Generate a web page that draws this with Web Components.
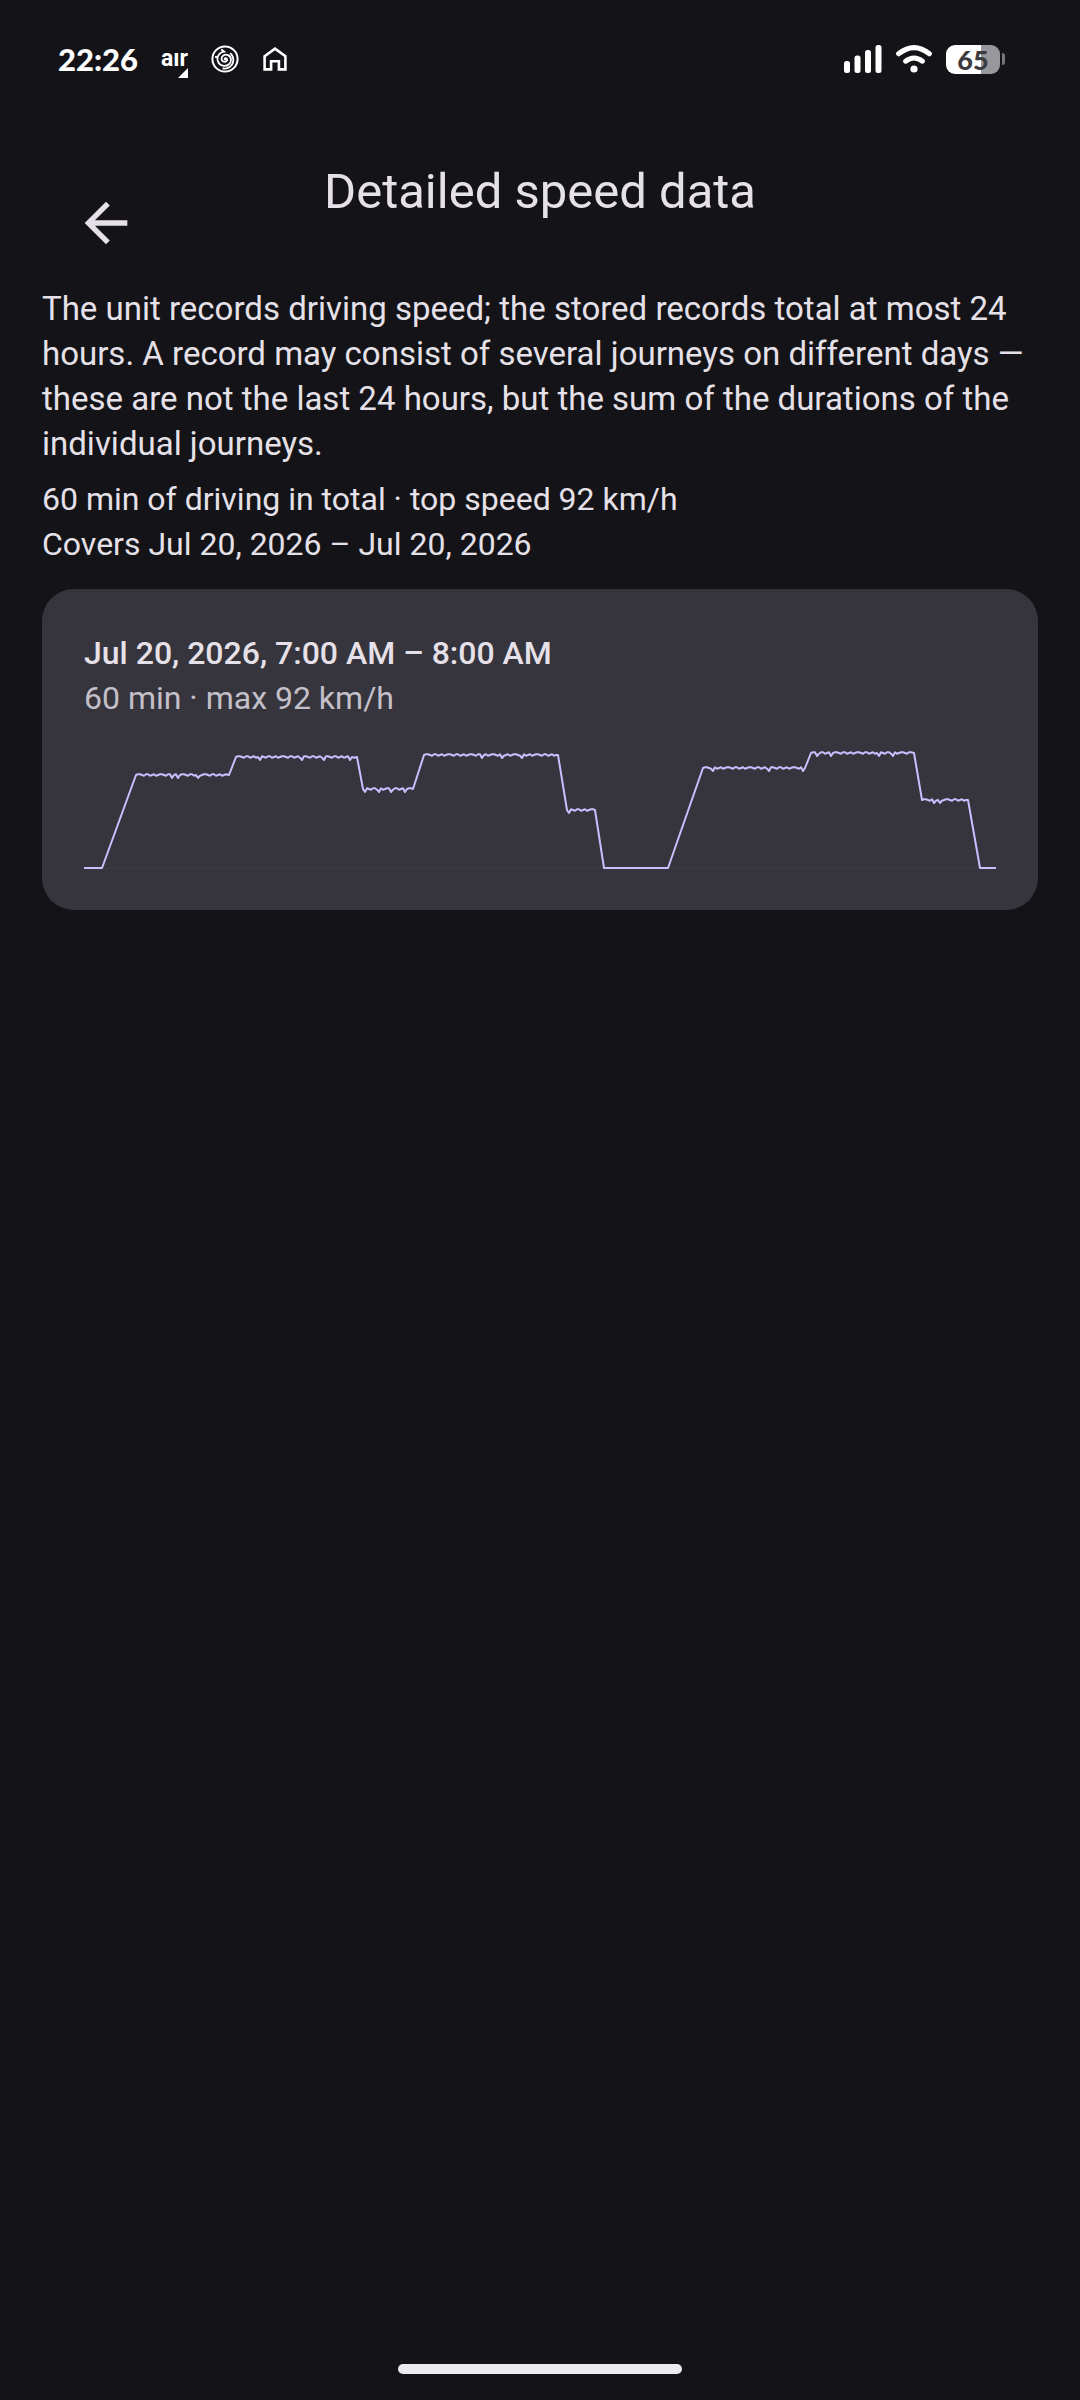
<!DOCTYPE html>
<html lang="en">
<head>
<meta charset="utf-8">
<meta name="viewport" content="width=device-width, initial-scale=1">
<title>Detailed speed data</title>
<style>
    body {
        margin: 0;
        background-color: #141318;
        color: #e6e1e9;
        font-family: Roboto, "Noto Sans", sans-serif;
    }
</style>
</head>
<body>

<phone-screen>
    <status-bar slot="status" time="22:26" battery="65"></status-bar>
    <app-header slot="header">Detailed speed data</app-header>

    <text-block size="large">
        <p>The unit records driving speed; the stored records total at most 24 hours. A record may consist of several journeys on different days — these are not the last 24 hours, but the sum of the durations of the individual journeys.</p>
    </text-block>
    <text-block>
        <p>60 min of driving in total · top speed 92 km/h</p>
        <p>Covers Jul 20, 2026 – Jul 20, 2026</p>
    </text-block>
    <record-card>
        <span slot="title">Jul 20, 2026, 7:00 AM – 8:00 AM</span>
        <span slot="summary">60 min · max 92 km/h</span>
        <speed-chart></speed-chart>
    </record-card>
</phone-screen>

<script>
class PhoneScreen extends HTMLElement
{
    constructor()
    {
        super();

        this.attachShadow({mode: 'open'});
    }

    connectedCallback()
    {
        this.shadowRoot.innerHTML =
        `<style>
            :host {
                display: flex;
                flex-direction: column;
                min-height: 100vh;
            }

            main {
                display: flex;
                flex-direction: column;
                flex: 1;
                padding: 0 42px;
            }

            footer {
                display: flex;
                justify-content: center;
                padding: 26px 0;
            }

            .handle {
                width: 284px;
                height: 10px;
                border-radius: 5px;
                background-color: #ececee;
            }
        </style>

        <slot name='status'></slot>
        <slot name='header'></slot>
        <main><slot></slot></main>
        <footer><div class='handle'></div></footer>`;
    }
}

class StatusBar extends HTMLElement
{
    constructor()
    {
        super();

        this.attachShadow({mode: 'open'});
    }

    connectedCallback()
    {
        const time = this.getAttribute('time');
        const battery = this.getAttribute('battery');

        this.shadowRoot.innerHTML =
        `<style>
            :host {
                display: flex;
                justify-content: space-between;
                align-items: center;
                height: 118px;
                padding: 0 75px 0 58px;
                color: #fff;
                font-family: Lato, sans-serif;
                font-weight: 900;
            }

            div {
                display: flex;
                align-items: center;
            }

            svg {
                display: block;
            }

            .left {
                gap: 23px;
            }

            .right {
                gap: 14px;
            }

            time {
                font-size: 31px;
            }

            .air {
                align-items: flex-end;
                flex-direction: column;
                font: 700 23px/22px Roboto, sans-serif;
            }

            .air svg {
                margin: -2px 0 -8px;
            }

            .level {
                justify-content: center;
                width: 54px;
                height: 29px;
                border-radius: 9px;
                background: linear-gradient(to right, #fff ${battery}%, #98979c ${battery}%);
                color: #3d3c40;
                font-size: 27px;
                line-height: 29px;
            }

            .battery {
                gap: 2px;
            }

            .nub {
                width: 3px;
                height: 12px;
                border-radius: 0 3px 3px 0;
                background-color: #77767b;
            }
        </style>

        <div class='left'>
            <time>${time}</time>
            <div class='air'>
                <span>aır</span>
                <svg width='10' height='10' viewBox='0 0 10 10'><path d='M10 0v10H0z' fill='#fff'/></svg>
            </div>
            <svg width='28' height='28' viewBox='0 0 28 28' fill='none' stroke='#fff' stroke-linecap='round'>
                <circle cx='14' cy='14' r='12.6' stroke-width='2'/>
                <path stroke-width='1.8' d='M14.2 14.4c-.8.4-1-.9.1-1.3 1.7-.4 2.6 1.8 1.2 3-2 1.7-5 .2-5-2.3 0-3.3 3.6-5 6.5-3.7 3.7 1.7 3.9 6.6 1 9.1-3.6 3.1-9.2 1.6-11-2.6-.8-1.9-.8-3.3-.3-4.7L4.7 12M6.7 11.9c1.3-3.3 3.6-5 6.4-5.3l-2.3-1.9M19.6 8.6c4 3.7 3.5 9.9-.4 13-2 1.7-4.6 2.2-6.9 1.9'/>
            </svg>
            <svg width='26' height='26' viewBox='0 0 26 26' fill='none' stroke='#fff' stroke-width='2.6'>
                <path d='M2.6 10.2 13 2.6l10.4 7.6v13.2h-6.5v-8.2H9.1v8.2H2.6z'/>
            </svg>
        </div>

        <div class='right'>
            <svg width='38' height='28' viewBox='0 0 38 28' fill='#fff'>
                <rect x='0' y='16' width='6' height='12' rx='2.5'/>
                <rect x='10.5' y='10.5' width='6' height='17.5' rx='2.5'/>
                <rect x='21' y='5' width='6' height='23' rx='2.5'/>
                <rect x='31.5' y='0' width='6' height='28' rx='2.5'/>
            </svg>
            <svg width='36' height='28' viewBox='0 0 36 28' fill='none' stroke='#fff' stroke-width='5' stroke-linecap='round'>
                <path d='M2.6 8.8Q18-3.6 33.4 8.8M9.6 16.2q8.4-6.4 16.8 0'/>
                <circle cx='18' cy='24' r='3.6' fill='#fff' stroke='none'/>
            </svg>
            <div class='battery'>
                <div class='level'>${battery}</div>
                <span class='nub'></span>
            </div>
        </div>`;
    }
}

class AppHeader extends HTMLElement
{
    constructor()
    {
        super();

        this.attachShadow({mode: 'open'});
    }

    connectedCallback()
    {
        this.shadowRoot.innerHTML =
        `<style>
            :host {
                display: grid;
                grid-template-columns: 1fr auto 1fr;
                align-items: start;
                padding: 42px 74px 0;
                margin-bottom: 31px;
            }

            h1 {
                margin: 0;
                font-size: 49px;
                font-weight: 400;
                line-height: 64px;
            }

            button {
                justify-self: start;
                width: 64px;
                height: 64px;
                margin-top: 31px;
                padding: 0;
                border: none;
                background: none;
                color: inherit;
            }

            svg {
                display: block;
            }
        </style>

        <button type='button' aria-label='Back'>
            <svg width='64' height='64' viewBox='0 0 24 24' fill='currentColor'>
                <path d='M20 11H7.83l5.59-5.59L12 4l-8 8 8 8 1.41-1.41L7.83 13H20z'/>
            </svg>
        </button>
        <h1><slot></slot></h1>`;
    }
}

class TextBlock extends HTMLElement
{
    constructor()
    {
        super();

        this.attachShadow({mode: 'open'});
    }

    connectedCallback()
    {
        this.shadowRoot.innerHTML =
        `<style>
            :host {
                display: block;
                margin-bottom: 22px;
                font-size: 32px;
                line-height: 45px;
            }

            :host([size=large]) {
                margin-bottom: 11px;
                font-size: 33px;
            }

            ::slotted(p) {
                margin: 0;
            }
        </style>

        <slot></slot>`;
    }
}

class RecordCard extends HTMLElement
{
    constructor()
    {
        super();

        this.attachShadow({mode: 'open'});
    }

    connectedCallback()
    {
        this.shadowRoot.innerHTML =
        `<style>
            :host {
                display: block;
                padding: 42px;
                border-radius: 32px;
                background-color: #36343c;
                font-size: 32px;
                line-height: 45px;
            }

            h2 {
                margin: 0;
                font-size: inherit;
                font-weight: 500;
            }

            p {
                margin: 0 0 21px;
                color: #c4c0c9;
            }
        </style>

        <h2><slot name='title'></slot></h2>
        <p><slot name='summary'></slot></p>
        <slot></slot>`;
    }
}

// Each step: start, end and height of a steady stretch, then where the speed dips.
const STEPS = [
    [0, 18, 126, []],
    [52, 145, 33, [88, 94, 115]],
    [152, 273, 15, [177, 218, 240, 266]],
    [279, 329, 47, [281, 295, 307, 322]],
    [340, 474, 13, [398, 419, 438]],
    [483, 511, 68, [486]],
    [520, 584, 126, []],
    [619, 721, 26, [630, 685, 720]],
    [727, 830, 11, [733, 747, 796, 810]],
    [838, 884, 58, [850, 856]],
    [896, 912, 126, []]
];

class SpeedChart extends HTMLElement
{
    constructor()
    {
        super();

        this.attachShadow({mode: 'open'});
    }

    connectedCallback()
    {
        this.shadowRoot.innerHTML =
        `<style>
            :host {
                display: block;
                height: 126px;
            }

            svg {
                display: block;
                width: 100%;
                height: 100%;
                overflow: visible;
            }

            path {
                fill: none;
                stroke: #cbbeff;
                stroke-width: 2;
                stroke-linejoin: round;
            }

            line {
                stroke: #3d3c40;
            }
        </style>

        <svg viewBox='0 0 912 126' preserveAspectRatio='none' role='img' aria-label='Speed over time'>
            <line x1='0' y1='126' x2='912' y2='126'/>
            <path d='${this.buildPath()}'/>
        </svg>`;
    }

    buildPath()
    {
        const wave = [0, -1, -1, 0, 1, -1, -1, 1, 0, -1, 1];
        const points = [];

        for (const [start, end, y, dips] of STEPS)
        {
            points.push([start, y]);

            if (y < 126)
            {
                for (let x = start + 2; x < end - 1; x += 2)
                {
                    const dip = dips.some(d => d === x || d === x + 1);
                    points.push([x, y + (dip ? 3 : wave[(x - start) / 2 % wave.length] * 0.7)]);
                }
            }

            points.push([end, y]);
        }

        return 'M' + points.map(p => p.join(' ')).join('L');
    }
}

window.customElements.define('phone-screen', PhoneScreen);
window.customElements.define('status-bar', StatusBar);
window.customElements.define('app-header', AppHeader);
window.customElements.define('text-block', TextBlock);
window.customElements.define('record-card', RecordCard);
window.customElements.define('speed-chart', SpeedChart);
</script>
</body>
</html>
